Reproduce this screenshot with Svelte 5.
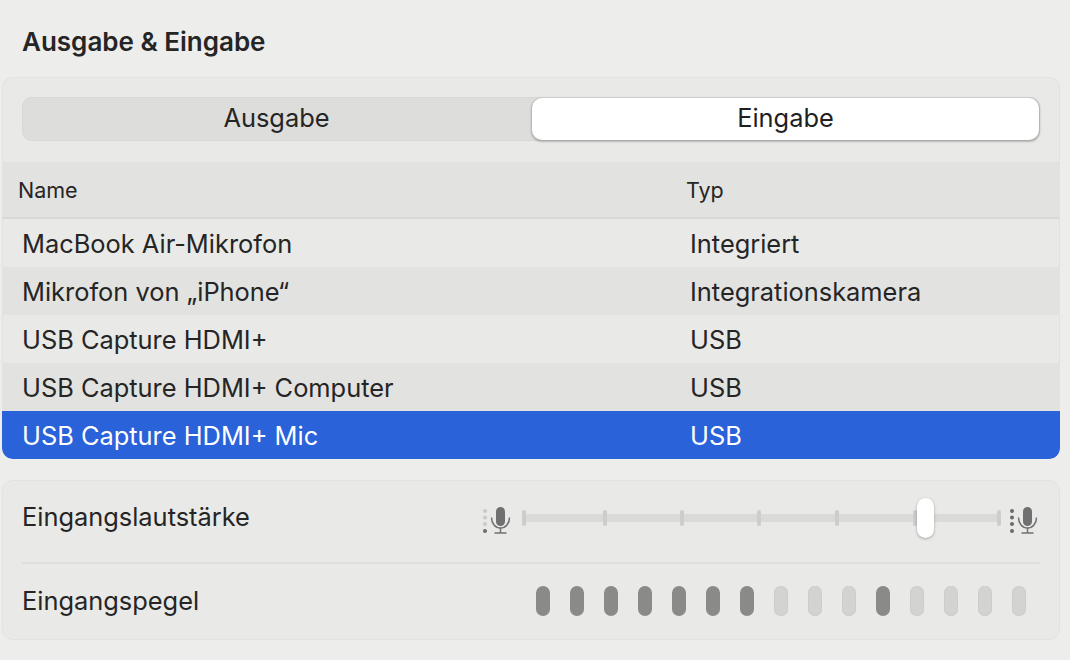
<script>
  const rows = [
    { name: "MacBook Air-Mikrofon", type: "Integriert" },
    { name: "Mikrofon von „iPhone“", type: "Integrationskamera" },
    { name: "USB Capture HDMI+", type: "USB" },
    { name: "USB Capture HDMI+ Computer", type: "USB" },
    { name: "USB Capture HDMI+ Mic", type: "USB", selected: true }
  ];
  const ticks = [0, 81, 158, 235, 313, 391, 475];
  const level = [1, 1, 1, 1, 1, 1, 1, 0, 0, 0, 1, 0, 0, 0, 0];
</script>

<main class="page">
  <h1>Ausgabe &amp; Eingabe</h1>

  <section class="card devices">
    <div class="segments-wrap">
      <div class="segments">
        <div class="segment">Ausgabe</div>
        <div class="segment active">Eingabe</div>
      </div>
    </div>

    <div class="table-head">
      <span class="col-name">Name</span>
      <span class="col-type">Typ</span>
    </div>

    {#each rows as row, idx (row.name)}
      <div class="row" class:odd={idx % 2 === 1} class:selected={row.selected}>
        <span class="col-name">{row.name}</span>
        <span class="col-type">{row.type}</span>
      </div>
    {/each}
  </section>

  <section class="card controls">
    <div class="control volume">
      <span class="label">Eingangslautstärke</span>
      <div class="slider">
        <svg class="mic low" width="36" height="32" viewBox="0 0 36 32">
          <circle cx="5" cy="9" r="2" fill="#c9c9c7" />
          <circle cx="5" cy="15.5" r="2" fill="#c9c9c7" />
          <circle cx="5" cy="22" r="2" fill="#c9c9c7" />
          <circle cx="5" cy="29" r="2" fill="#6b6b6b" />
          <rect x="16" y="5" width="9" height="19" rx="4.5" fill="#707070" />
          <path d="M11.5 15.5c0 6 3.8 10.5 9 10.5s9-4.5 9-10.5M20.5 26v5M14.5 31h12" fill="none" stroke="#707070" stroke-width="1.5" />
        </svg>
        <div class="track">
          {#each ticks as t}
            <i class="tick" style={`left: ${t}px`}></i>
          {/each}
          <div class="thumb"></div>
        </div>
        <svg class="mic" width="36" height="32" viewBox="0 0 36 32">
          <circle cx="5" cy="9" r="2" fill="#6b6b6b" />
          <circle cx="5" cy="15.5" r="2" fill="#6b6b6b" />
          <circle cx="5" cy="22" r="2" fill="#6b6b6b" />
          <circle cx="5" cy="29" r="2" fill="#6b6b6b" />
          <rect x="16" y="5" width="9" height="19" rx="4.5" fill="#707070" />
          <path d="M11.5 15.5c0 6 3.8 10.5 9 10.5s9-4.5 9-10.5M20.5 26v5M14.5 31h12" fill="none" stroke="#707070" stroke-width="1.5" />
        </svg>
      </div>
    </div>
    <div class="control meter-row">
      <span class="label">Eingangspegel</span>
      <div class="meter">
        {#each level as on}
          <i class="pill" class:on={on === 1}></i>
        {/each}
      </div>
    </div>
  </section>
</main>

<style>
  :global(body) {
    margin: 0;
    background: #edEDEB;
  }

  .page {
    width: 1070px;
    height: 660px;
    box-sizing: border-box;
    padding: 0 10px 0 2px;
    overflow: hidden;
    font-family: Inter, "Liberation Sans", sans-serif;
    color: #252525;
    font-size: 25.4px;
  }

  h1 {
    margin: 0;
    padding: 27px 0 0 20px;
    height: 77px;
    box-sizing: border-box;
    font-size: 26px;
    line-height: 30px;
    font-weight: 600;
  }

  .card {
    width: 1058px;
    box-sizing: border-box;
    background: #e9e9e7;
    border: 1px solid #e2e2e0;
    border-radius: 11px;
  }

  .devices {
    height: 382px;
    overflow: hidden;
    border: none;
    box-shadow: inset 0 0 0 1px #e2e2e0;
  }

  .segments-wrap {
    padding: 20px 20px 0;
    height: 85px;
    box-sizing: border-box;
  }

  .segments {
    display: grid;
    grid-template-columns: 1fr 1fr;
    height: 44px;
    background: #dddddb;
    border-radius: 10px;
    box-shadow: inset 0 0 0 1px #d8d8d6;
  }

  .segment {
    display: flex;
    align-items: center;
    justify-content: center;
    padding-bottom: 3px;
    border-radius: 10px;
  }

  .segment.active {
    margin: 1px;
    padding-bottom: 4px;
    background: #fff;
    box-shadow: 0 1px 2px 1px rgba(0, 0, 0, 0.22);
    color: #1f1f1f;
  }

  .table-head {
    display: flex;
    align-items: center;
    height: 57px;
    box-sizing: border-box;
    background: #e2e2e0;
    border-top: 1px solid #e0e0de;
    border-bottom: 2px solid #d9d9d7;
    font-size: 21.5px;
    padding-bottom: 1px;
  }

  .table-head .col-name {
    margin-left: 16px;
    width: 668px;
  }

  .row {
    display: flex;
    align-items: center;
    height: 48px;
  }

  .row .col-name {
    margin-left: 20px;
    width: 668px;
  }

  .row.odd {
    background: #e2e2e0;
  }

  .row.selected {
    background: #2962d9;
    color: #fff;
    border-radius: 0 0 10px 10px;
  }

  .controls {
    margin-top: 21px;
    height: 160px;
    padding: 0 19px;
  }

  .control {
    display: flex;
    align-items: center;
    justify-content: space-between;
  }

  .volume {
    height: 83px;
    box-sizing: border-box;
    padding-bottom: 11px;
    border-bottom: 2px solid #dfdfdd;
  }

  .meter-row {
    height: 74px;
  }

  .meter-row .label {
    padding-bottom: 2px;
  }

  .slider {
    display: flex;
    align-items: center;
    margin-right: -3px;
    margin-top: 4px;
  }

  .mic {
    display: block;
  }

  .mic.low {
    margin-right: 6px;
  }

  .track {
    position: relative;
    width: 477px;
    height: 8px;
    background: #dadad8;
    margin-right: 8px;
  }

  .tick {
    position: absolute;
    top: -4px;
    width: 4px;
    height: 16px;
    border-radius: 2px;
    background: #cdcdcb;
  }

  .thumb {
    position: absolute;
    left: 395px;
    top: -16px;
    width: 17px;
    height: 40px;
    border-radius: 9px;
    background: #fff;
    box-shadow: 0 1px 3px rgba(0, 0, 0, 0.3);
  }

  .meter {
    display: flex;
    gap: 20px;
    margin-right: 14px;
  }

  .pill {
    display: block;
    width: 14px;
    height: 30px;
    border-radius: 7px;
    background: #d3d3d1;
    box-shadow: inset 0 0 0 1px #cdcdcb;
  }

  .pill.on {
    background: #8a8a88;
    box-shadow: none;
  }
</style>
